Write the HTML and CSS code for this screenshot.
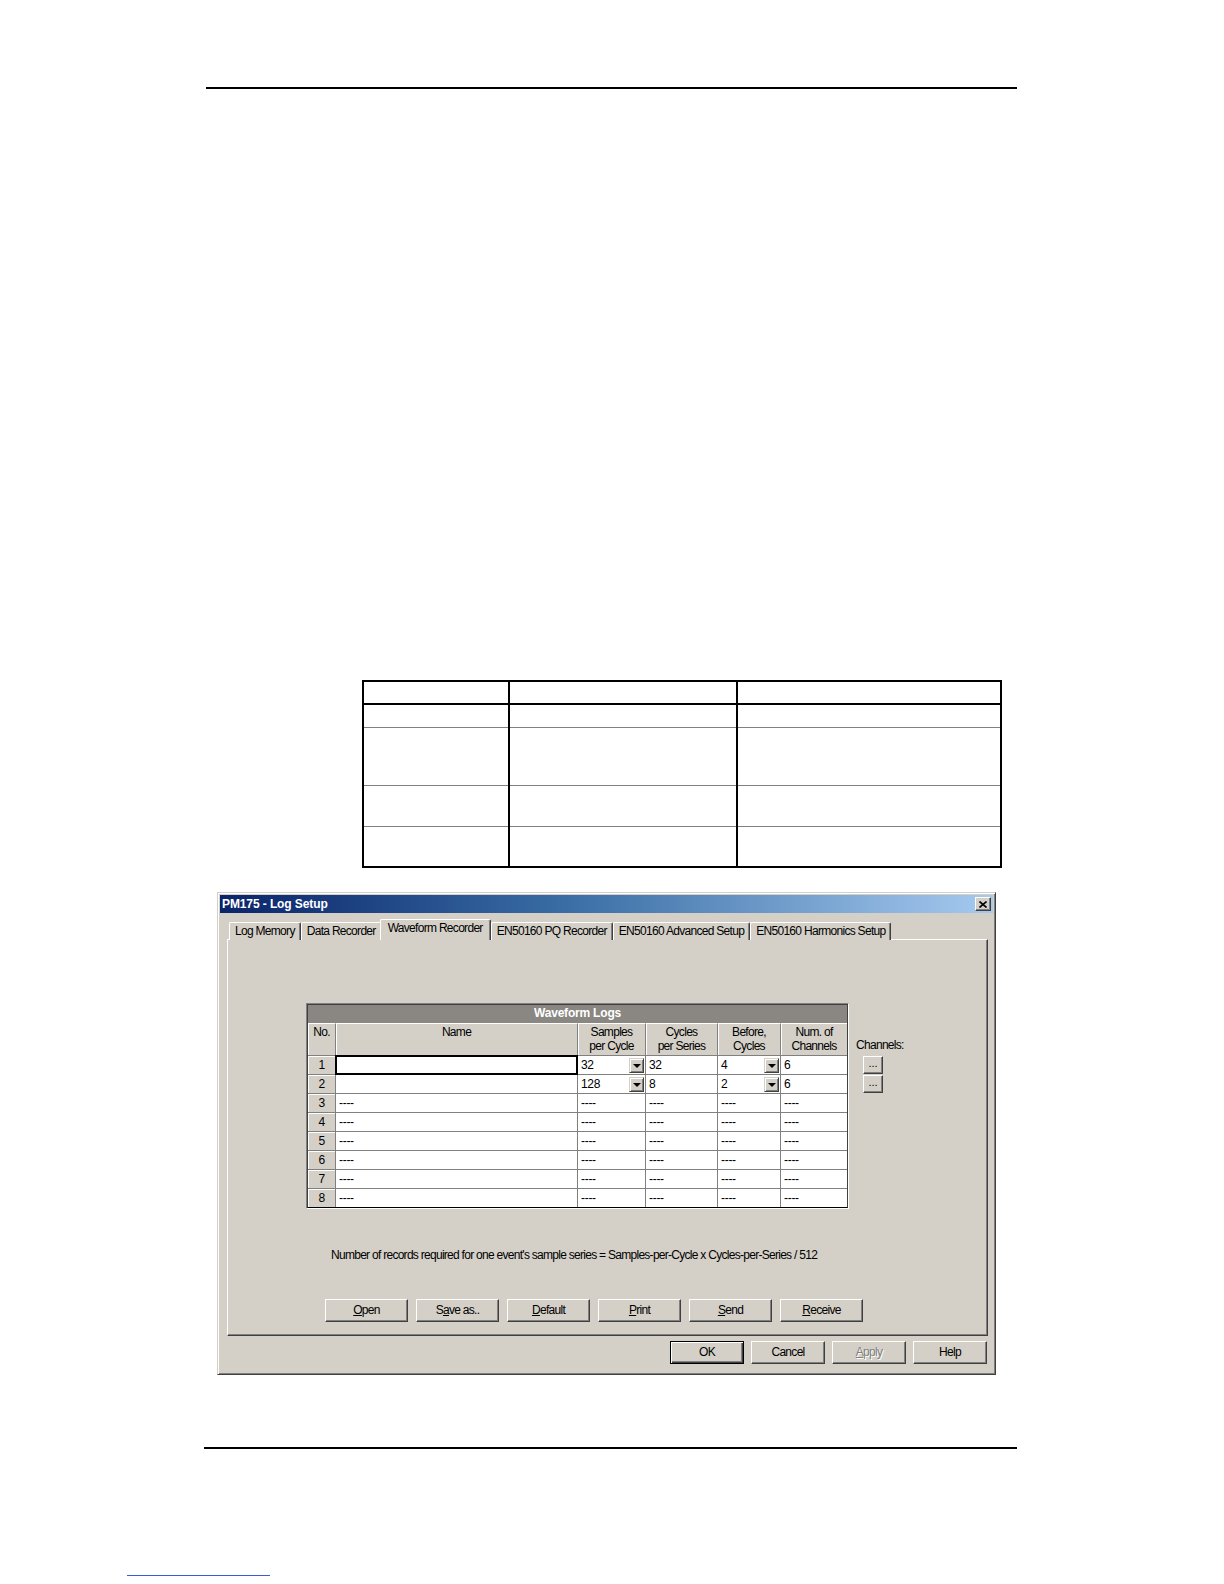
FILE: index.html
```html
<!DOCTYPE html>
<html>
<head>
<meta charset="utf-8">
<title>PM175 - Log Setup</title>
<link rel="stylesheet" href="styles.css">
</head>
<body>
<div class="page">
  <div class="rule rule-top"></div>

  <table class="doc-table">
    <tr class="r-head"><td class="c1"></td><td class="c2"></td><td class="c3"></td></tr>
    <tr class="r-a"><td></td><td></td><td></td></tr>
    <tr class="r-b"><td></td><td></td><td></td></tr>
    <tr class="r-c"><td></td><td></td><td></td></tr>
    <tr class="r-d"><td></td><td></td><td></td></tr>
  </table>

  <div class="dialog">
    <div class="titlebar">
      <span class="title-text">PM175 - Log Setup</span>
      <span class="close-btn"><svg width="8" height="7" viewBox="0 0 8 7"><path d="M0.5 0.5 L7.5 6.5 M7.5 0.5 L0.5 6.5" stroke="#000" stroke-width="1.6" fill="none"/></svg></span>
    </div>

    <div class="tabs">
      <div class="tab">Log Memory</div>
      <div class="tab">Data Recorder</div>
      <div class="tab tab-active">Waveform Recorder</div>
      <div class="tab">EN50160 PQ Recorder</div>
      <div class="tab">EN50160 Advanced Setup</div>
      <div class="tab">EN50160 Harmonics Setup</div>
    </div>

    <div class="panel">
      <div class="grid-area">
        <div class="wgrid-frame">
          <div class="wgrid">
            <div class="wg-title">Waveform Logs</div>
            <div class="wg-head">
              <div class="hc">No.</div>
              <div class="hc">Name</div>
              <div class="hc">Samples<br>per Cycle</div>
              <div class="hc">Cycles<br>per Series</div>
              <div class="hc">Before,<br>Cycles</div>
              <div class="hc last">Num. of<br>Channels</div>
            </div>
            <div class="wg-body">
              <div class="no">1</div><div class="dc name focus"></div><div class="dc combo"><span>32</span><i class="dd"></i></div><div class="dc">32</div><div class="dc combo"><span>4</span><i class="dd"></i></div><div class="dc last">6</div>
              <div class="no">2</div><div class="dc name"></div><div class="dc combo"><span>128</span><i class="dd"></i></div><div class="dc">8</div><div class="dc combo"><span>2</span><i class="dd"></i></div><div class="dc last">6</div>
              <div class="no">3</div><div class="dc">----</div><div class="dc">----</div><div class="dc">----</div><div class="dc">----</div><div class="dc last">----</div>
              <div class="no">4</div><div class="dc">----</div><div class="dc">----</div><div class="dc">----</div><div class="dc">----</div><div class="dc last">----</div>
              <div class="no">5</div><div class="dc">----</div><div class="dc">----</div><div class="dc">----</div><div class="dc">----</div><div class="dc last">----</div>
              <div class="no">6</div><div class="dc">----</div><div class="dc">----</div><div class="dc">----</div><div class="dc">----</div><div class="dc last">----</div>
              <div class="no">7</div><div class="dc">----</div><div class="dc">----</div><div class="dc">----</div><div class="dc">----</div><div class="dc last">----</div>
              <div class="no b">8</div><div class="dc b">----</div><div class="dc b">----</div><div class="dc b">----</div><div class="dc b">----</div><div class="dc last b">----</div>
            </div>
          </div>
        </div>
        <div class="channels">
          <div class="ch-label">Channels:</div>
          <div class="btn ch-btn">...</div>
          <div class="btn ch-btn">...</div>
        </div>
      </div>

      <div class="note">Number of records required for one event's sample series = Samples-per-Cycle x Cycles-per-Series / 512</div>

      <div class="btn-row">
        <div class="btn act"><u>O</u>pen</div>
        <div class="btn act">S<u>a</u>ve as..</div>
        <div class="btn act"><u>D</u>efault</div>
        <div class="btn act"><u>P</u>rint</div>
        <div class="btn act"><u>S</u>end</div>
        <div class="btn act"><u>R</u>eceive</div>
      </div>
    </div>

    <div class="footer-btns">
      <div class="btn fbtn default">OK</div>
      <div class="btn fbtn">Cancel</div>
      <div class="btn fbtn disabled"><u>A</u>pply</div>
      <div class="btn fbtn">Help</div>
    </div>
  </div>

  <div class="rule rule-bottom"></div>
  <div class="link-line"></div>
</div>
</body>
</html>
```
FILE: styles.css
```css
* { box-sizing: border-box; }

body {
  margin: 0;
  background: #fff;
  font-family: "Liberation Sans", Arial, sans-serif;
  color: #000;
}

.page {
  width: 1224px;
  height: 1584px;
  overflow: hidden;
  padding-top: 87px;
}

.rule { height: 2px; background: #000; }
.rule-top { margin-left: 206px; width: 811px; }
.rule-bottom { margin: 72px 0 0 204px; width: 813px; }

.link-line {
  margin: 126px 0 0 127px;
  width: 143px;
  height: 1px;
  background: #3b5bd8;
}

/* empty document table */
.doc-table {
  margin: 591px 0 0 362px;
  width: 640px;
  border-collapse: collapse;
  border: 2px solid #000;
}
.doc-table td {
  border-left: 2px solid #000;
  border-right: 2px solid #000;
  border-bottom: 1px solid #808080;
  padding: 0;
}
.doc-table .c1 { width: 146px; }
.doc-table .c2 { width: 228px; }
.doc-table .r-head td { border-bottom: 2px solid #000; height: 23px; }
.doc-table .r-a td { height: 23px; }
.doc-table .r-b td { height: 58px; }
.doc-table .r-c td { height: 41px; }
.doc-table .r-d td { height: 41px; border-bottom: 2px solid #000; }

/* dialog */
.dialog {
  margin: 24px 0 0 217px;
  width: 779px;
  height: 483px;
  background: #d4d0c8;
  border: 1px solid;
  border-color: #d4d0c8 #404040 #404040 #d4d0c8;
  box-shadow: inset 1px 1px #fff, inset -1px -1px #808080;
  padding: 2px 2px 0 2px;
  font-size: 12px;
  letter-spacing: -0.7px;
}

.titlebar {
  height: 18px;
  background: linear-gradient(to right, #0a246a 0%, #3a6ea5 45%, #a6caf0 100%);
  display: flex;
  align-items: center;
  justify-content: space-between;
  padding: 0 2px 0 2px;
}
.title-text {
  color: #fff;
  font-weight: bold;
  font-size: 12px;
  letter-spacing: -0.1px;
}
.close-btn {
  width: 16px;
  height: 14px;
  background: #d4d0c8;
  border: 1px solid;
  border-color: #fff #404040 #404040 #fff;
  box-shadow: inset -1px -1px #808080;
  display: flex;
  align-items: center;
  justify-content: center;
}

.tabs {
  display: flex;
  align-items: flex-end;
  height: 21px;
  margin: 6px 0 -1px 9px;
  position: relative;
  z-index: 1;
}
.tab {
  height: 18px;
  padding: 1px 5px 0 5px;
  line-height: 15px;
  border: 1px solid;
  border-color: #fff #404040 transparent #fff;
  border-bottom: none;
  box-shadow: inset -1px 0 #808080;
  border-radius: 2px 2px 0 0;
  background: #d4d0c8;
  white-space: nowrap;
}
.tab-active {
  height: 21px;
  margin: 0 -2px 0 -2px;
  padding: 1px 7px 0 7px;
  position: relative;
  z-index: 2;
}
.tab-active + .tab { margin-left: 2px; }

.panel {
  margin: 0 5px 0 7px;
  height: 397px;
  border: 1px solid;
  border-color: #fff #404040 #404040 #fff;
  box-shadow: inset -1px -1px #808080;
  position: relative;
}

.grid-area {
  display: flex;
  align-items: flex-start;
  margin: 63px 0 0 78px;
}

.wgrid-frame {
  border: 1px solid;
  border-color: #808080 #fff #fff #808080;
}
.wgrid {
  width: 541px;
  border: 1px solid #404040;
  border-bottom-color: #000;
  background: #d4d0c8;
}
.wg-title {
  height: 18px;
  background: #8a8782;
  color: #fff;
  font-weight: bold;
  text-align: center;
  line-height: 17px;
  letter-spacing: -0.2px;
}
.wg-head, .wg-body {
  display: grid;
  grid-template-columns: 28px 242px 68px 72px 63px 66px;
}
.hc {
  height: 33px;
  border-right: 1px solid #808080;
  border-bottom: 1px solid #808080;
  border-top: 1px solid #fff;
  box-shadow: inset 1px 0 #fff;
  text-align: center;
  line-height: 14px;
  padding-top: 1px;
}
.wg-body { grid-template-rows: 19px 19px 19px 19px 19px 19px 19px 18px; }
.no {
  background: #d4d0c8;
  border-right: 1px solid #808080;
  border-bottom: 1px solid #808080;
  box-shadow: inset 1px 1px #fff;
  text-align: center;
  line-height: 18px;
}
.dc {
  background: #fff;
  border-right: 1px solid #808080;
  border-bottom: 1px solid #808080;
  padding-left: 3px;
  line-height: 18px;
  white-space: nowrap;
  letter-spacing: -0.3px;
}
.last { border-right: none; }
.b { border-bottom: none; }
.dc.focus {
  border: 2px solid #000;
  margin-top: -1px;
  height: 20px;
  margin-left: -1px;
}
.combo {
  display: flex;
  align-items: center;
  justify-content: space-between;
  padding-right: 1px;
}
.dd {
  display: flex;
  align-items: center;
  justify-content: center;
  width: 15px;
  height: 15px;
  background: #d4d0c8;
  border: 1px solid;
  border-color: #d4d0c8 #404040 #404040 #d4d0c8;
  box-shadow: inset 1px 1px #fff, inset -1px -1px #808080;
}
.dd::after {
  content: "";
  border-left: 4px solid transparent;
  border-right: 4px solid transparent;
  border-top: 4px solid #000;
  margin-top: 1px;
}

.channels {
  margin-left: 7px;
  padding-top: 35px;
}
.ch-label { line-height: 15px; }
.ch-btn {
  width: 20px;
  height: 18px;
  margin: 3px 0 0 7px;
  line-height: 13px;
  text-align: center;
  font-size: 11px;
  letter-spacing: 0;
}
.ch-btn + .ch-btn { margin-top: 1px; }

.btn {
  background: #d4d0c8;
  border: 1px solid;
  border-color: #fff #404040 #404040 #fff;
  box-shadow: inset -1px -1px #808080;
}

.note {
  margin: 39px 0 0 103px;
  line-height: 15px;
  letter-spacing: -0.72px;
}

.btn-row {
  display: flex;
  gap: 8px;
  margin: 36px 0 0 97px;
}
.act {
  width: 83px;
  height: 23px;
  text-align: center;
  line-height: 21px;
}

.footer-btns {
  display: flex;
  justify-content: flex-end;
  gap: 7px;
  margin: 5px 6px 0 0;
}
.fbtn {
  width: 74px;
  height: 23px;
  text-align: center;
  line-height: 21px;
}
.fbtn.default {
  border: 1px solid #000;
  box-shadow: inset 1px 1px #fff, inset -1px -1px #404040, inset -2px -2px #808080;
}
.fbtn.disabled {
  color: #808080;
  text-shadow: 1px 1px #fff;
}
```
